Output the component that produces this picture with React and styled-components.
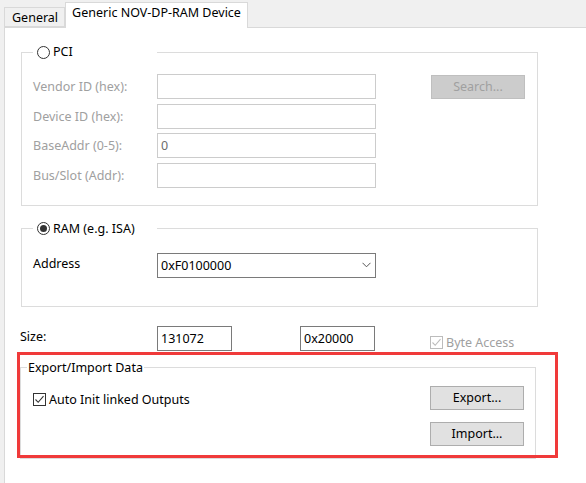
import styled, { createGlobalStyle } from 'styled-components';

const GlobalStyle = createGlobalStyle`
  html, body {
    margin: 0;
    padding: 0;
    background: #f0f0f0;
    font-family: "Noto Sans", "Liberation Sans", sans-serif;
    font-size: 12.5px;
    color: #000;
  }
`

const Window = styled.div`
  position: relative;
  width: 586px;
  height: 483px;
  overflow: hidden;
  display: flex;
  flex-direction: column;
`

const TabBar = styled.div`
  display: flex;
  align-items: flex-end;
  height: 27px;
  padding-left: 4px;
  box-sizing: border-box;
`

const Tab = styled.div`
  box-sizing: border-box;
  height: ${p => (p.$active ? '26px' : '20px')};
  padding: 1px 6px 0 ${p => (p.$active ? 6 : 7)}px;
  margin-bottom: ${p => (p.$active ? '-1px' : '0')};
  background: ${p => (p.$active ? '#fff' : '#f0f0f0')};
  border: 1px solid #d9d9d9;
  border-bottom: ${p => (p.$active ? 'none' : '1px solid #d9d9d9')};
  line-height: 18px;
  position: relative;
  z-index: ${p => (p.$active ? 1 : 0)};
`

const Panel = styled.div`
  flex: 1;
  margin-left: 4px;
  background: #fff;
  border-top: 1px solid #d9d9d9;
  border-left: 1px solid #d9d9d9;
  padding: 16px 0 0 15px;
`

const GroupBox = styled.fieldset`
  box-sizing: border-box;
  width: ${p => p.$width}px;
  margin: ${p => p.$margin};
  padding: ${p => p.$padding};
  border: 1px solid #dcdcdc;
  min-inline-size: 0;
`

const GroupBody = styled.div`
  padding-left: ${p => p.$indent}px;
`

const Legend = styled.legend`
  margin-left: ${p => p.$indent}px;
  width: ${p => (p.$width ? `${p.$width}px` : 'auto')};
  padding: 0 1px 0 ${p => p.$pad}px;
  box-sizing: border-box;
  line-height: 16px;
  height: 16px;
  display: flex;
  align-items: center;
  gap: 3px;
  color: #000;
`

const RadioCircle = styled.span`
  box-sizing: border-box;
  width: 13px;
  height: 13px;
  border-radius: 50%;
  border: 1px solid #333;
  background: #fff;
  display: inline-flex;
  align-items: center;
  justify-content: center;
  &::after {
    content: '';
    width: 7px;
    height: 7px;
    border-radius: 50%;
    background: #333;
    display: ${p => (p.$checked ? 'block' : 'none')};
  }
`

const FormGrid = styled.div`
  display: grid;
  grid-template-columns: 124px 219px 55px 94px;
  grid-auto-rows: 25px;
  row-gap: 4.6px;
  align-items: center;
`

const Label = styled.div`
  color: ${p => (p.$disabled ? '#a0a0a0' : '#000')};
  align-self: ${p => p.$align || 'center'};
  padding-top: ${p => p.$shift || 0}px;
`

const Input = styled.div`
  box-sizing: border-box;
  height: 25px;
  width: ${p => p.$width || 219}px;
  border: 1px solid ${p => (p.$disabled ? '#cccccc' : '#7a7a7a')};
  background: #fff;
  padding: 0 3px;
  line-height: 23px;
  color: ${p => (p.$disabled ? '#6d6d6d' : '#000')};
  display: flex;
  align-items: center;
  justify-content: space-between;
`

const Button = styled.div`
  box-sizing: border-box;
  width: 94px;
  height: 24px;
  border: 1px solid ${p => (p.$disabled ? '#bfbfbf' : '#adadad')};
  background: ${p => (p.$disabled ? '#cccccc' : '#e1e1e1')};
  color: ${p => (p.$disabled ? '#a0a0a0' : '#000')};
  display: flex;
  align-items: center;
  justify-content: center;
  line-height: 22px;
`

const SizeRow = styled.div`
  display: grid;
  grid-template-columns: 137px 143px 130px auto;
  align-items: start;
  margin: 19px 0 0 0;
  height: 26px;
`

const CheckRow = styled.label`
  display: flex;
  align-items: center;
  gap: 3px;
  color: ${p => (p.$disabled ? '#a0a0a0' : '#000')};
  padding-top: ${p => p.$shift || 0}px;
`

const CheckBoxBox = styled.span`
  box-sizing: border-box;
  width: 13px;
  height: 13px;
  border: 1px solid ${p => (p.$disabled ? '#bcbcbc' : '#333')};
  background: #fff;
  display: inline-flex;
  align-items: center;
  justify-content: center;
`

const ExportBody = styled.div`
  display: flex;
  justify-content: space-between;
  align-items: flex-start;
  padding-left: 12px;
`

const ButtonColumn = styled.div`
  display: flex;
  flex-direction: column;
  gap: 12px;
  margin-right: 11px;
`

const Annotation = styled.div`
  position: absolute;
  left: 17px;
  top: 352px;
  width: 541px;
  height: 106px;
  box-sizing: border-box;
  border: 3px solid #f03a3a;
  pointer-events: none;
`

function CheckBox({ disabled }) {
  const c = disabled ? '#bcbcbc' : '#333'
  return (
    <CheckBoxBox $disabled={disabled}>
      <svg width="11" height="11" viewBox="0 0 11 11">
        <path d="M1.5 5.5 L4.2 8.3 L9.5 2.2" fill="none" stroke={c} strokeWidth="1.1" />
      </svg>
    </CheckBoxBox>
  )
}

function Chevron() {
  return (
    <svg width="9" height="6" viewBox="0 0 9 6" style={{ marginRight: 1 }}>
      <path d="M0.5 0.8 L4.5 4.8 L8.5 0.8" fill="none" stroke="#555" strokeWidth="1" />
    </svg>
  )
}

function App() {
  return (
    <Window>
      <GlobalStyle />
      <TabBar>
        <Tab>General</Tab>
        <Tab $active>Generic NOV-DP-RAM Device</Tab>
      </TabBar>
      <Panel>
        <GroupBox $width={517} $margin="0 0 0 1px" $padding="14px 0 17px 0">
          <Legend $indent={11} $width={124} $pad={4}>
            <RadioCircle />
            PCI
          </Legend>
          <GroupBody $indent={11}>
            <FormGrid>
              <Label $disabled>Vendor ID (hex):</Label>
              <Input $disabled />
              <span />
              <Button $disabled>Search...</Button>
              <Label $disabled>Device ID (hex):</Label>
              <Input $disabled />
              <span />
              <span />
              <Label $disabled>BaseAddr (0-5):</Label>
              <Input $disabled>0</Input>
              <span />
              <span />
              <Label $disabled>Bus/Slot (Addr):</Label>
              <Input $disabled />
            </FormGrid>
          </GroupBody>
        </GroupBox>

        <GroupBox $width={517} $margin="15px 0 0 1px" $padding="16px 0 28px 0">
          <Legend $indent={11} $width={124} $pad={4}>
            <RadioCircle $checked />
            RAM (e.g. ISA)
          </Legend>
          <GroupBody $indent={11}>
            <FormGrid>
              <Label $align="start" $shift={2}>Address</Label>
              <Input>
                0xF0100000
                <Chevron />
              </Input>
            </FormGrid>
          </GroupBody>
        </GroupBox>

        <SizeRow>
          <Label $align="start" $shift={2}>Size:</Label>
          <Input $width={75}>131072</Input>
          <Input $width={75}>0x20000</Input>
          <CheckRow $disabled $shift={8}>
            <CheckBox disabled />
            Byte Access
          </CheckRow>
        </SizeRow>

        <GroupBox $width={516} $margin="8px 0 0 0" $padding="10px 0 12px 0">
          <Legend $indent={6} $pad={1}>Export/Import Data</Legend>
          <ExportBody>
            <CheckRow $shift={5}>
              <CheckBox />
              Auto Init linked Outputs
            </CheckRow>
            <ButtonColumn>
              <Button>Export...</Button>
              <Button>Import...</Button>
            </ButtonColumn>
          </ExportBody>
        </GroupBox>
      </Panel>
      <Annotation />
    </Window>
  )
}

export default App
